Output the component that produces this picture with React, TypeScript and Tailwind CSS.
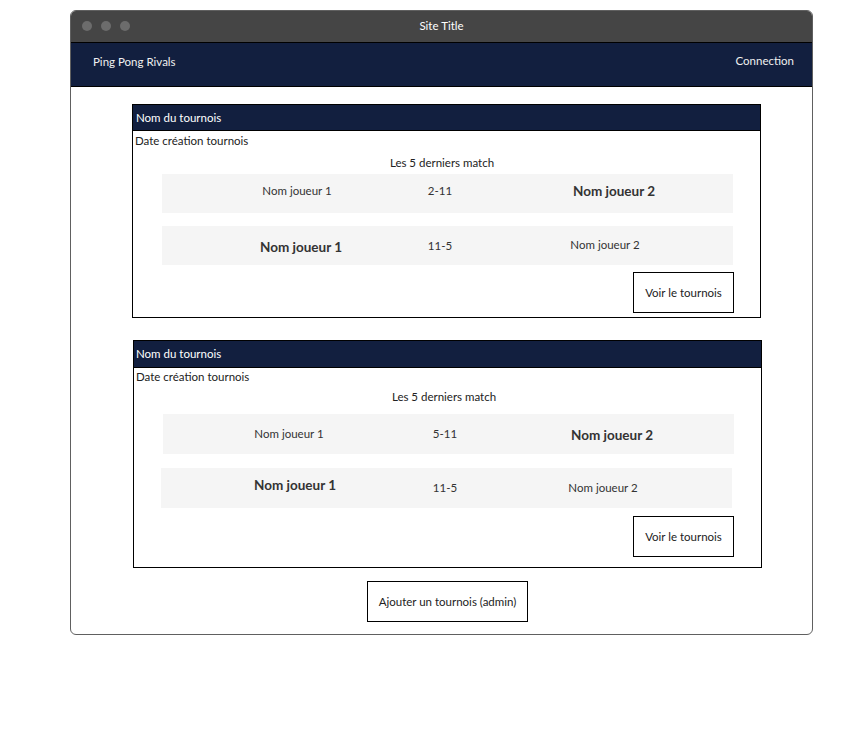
import React from "react";

const F = "font-['Lato',sans-serif]";

function Btn({ children, cls }: { children: React.ReactNode; cls: string }) {
  return (
    <div className={`border border-black bg-white flex items-center justify-center text-[11.5px] text-[#222] ${cls}`}>
      {children}
    </div>
  );
}

export default function App() {
  return (
    <div className={`w-[862px] h-[745px] bg-white ${F}`}>
      <div className="pt-[10px] pl-[70px]">
        <div className="w-[743px] border border-[#606060] rounded-[6px] overflow-hidden">
          {/* title bar */}
          <div className="h-[31px] bg-[#454545] relative flex items-center">
            <div className="flex gap-[9px] ml-[11px] mb-[2px]">
              <div className="w-[10px] h-[10px] rounded-full bg-[#6c6c6c]" />
              <div className="w-[10px] h-[10px] rounded-full bg-[#6c6c6c]" />
              <div className="w-[10px] h-[10px] rounded-full bg-[#6c6c6c]" />
            </div>
            <div className="absolute inset-0 flex items-center justify-center text-[11.5px] text-white pb-[1px]">Site Title</div>
          </div>
          {/* nav */}
          <div className="h-[45px] bg-[#121f3f] border-y border-black flex items-center justify-between pl-[22px] pr-[18px] text-[11.5px] text-[#f0f0f0]">
            <span className="mb-[5px]">Ping Pong Rivals</span>
            <span className="mb-[7px]">Connection</span>
          </div>

          {/* card 1 */}
          <div className="mt-[17px] ml-[61px] w-[629px] border border-black">
            <div className="h-[26px] bg-[#121f3f] border-b border-black flex items-center pl-[3px] text-[11.5px] text-white">
              Nom du tournois
            </div>
            <div className="h-[20px] flex items-center pl-[2px] text-[11.5px] text-[#222]">Date création tournois</div>
            <div className="h-[23px] flex items-center justify-center pr-[9px] text-[11.5px] text-[#222]">Les 5 derniers match</div>
            <div className="ml-[29px] w-[571px] h-[39px] bg-[#f5f5f5] flex items-center pb-[5px] text-[#333]">
              <div className="ml-[75px] w-[120px] text-center text-[11.5px]">Nom joueur 1</div>
              <div className="ml-[23px] w-[120px] text-center text-[11.5px]">2-11</div>
              <div className="ml-[54px] w-[120px] text-center text-[13.5px] font-bold">Nom joueur 2</div>
            </div>
            <div className="mt-[13px] ml-[29px] w-[571px] h-[39px] bg-[#f5f5f5] flex items-center text-[#333]">
              <div className="ml-[79px] w-[120px] text-center text-[13.5px] font-bold mt-[3px]">Nom joueur 1</div>
              <div className="ml-[19px] w-[120px] text-center text-[11.5px]">11-5</div>
              <div className="ml-[45px] w-[120px] text-center text-[11.5px] mb-[2px]">Nom joueur 2</div>
            </div>
            <div className="mt-[7px] mb-[4px] flex justify-end pr-[26px]">
              <Btn cls="w-[101px] h-[41px]">Voir le tournois</Btn>
            </div>
          </div>

          {/* card 2 */}
          <div className="mt-[22px] ml-[62px] w-[629px] border border-black">
            <div className="h-[27px] bg-[#121f3f] border-b border-black flex items-center pl-[2px] text-[11.5px] text-white">
              Nom du tournois
            </div>
            <div className="h-[18px] flex items-center pl-[2px] text-[11.5px] text-[#222]">Date création tournois</div>
            <div className="h-[22px] flex items-center justify-center pr-[7px] text-[11.5px] text-[#222]">Les 5 derniers match</div>
            <div className="mt-[6px] ml-[29px] w-[571px] h-[40px] bg-[#f5f5f5] flex items-center text-[#333]">
              <div className="ml-[66px] w-[120px] text-center text-[11.5px] mb-[1px]">Nom joueur 1</div>
              <div className="ml-[36px] w-[120px] text-center text-[11.5px] mb-[1px]">5-11</div>
              <div className="ml-[47px] w-[120px] text-center text-[13.5px] font-bold mt-[2px]">Nom joueur 2</div>
            </div>
            <div className="mt-[14px] ml-[27px] w-[571px] h-[40px] bg-[#f5f5f5] flex items-center text-[#333]">
              <div className="ml-[74px] w-[120px] text-center text-[13.5px] font-bold mb-[5px]">Nom joueur 1</div>
              <div className="ml-[30px] w-[120px] text-center text-[11.5px]">11-5</div>
              <div className="ml-[38px] w-[120px] text-center text-[11.5px] mb-[1px]">Nom joueur 2</div>
            </div>
            <div className="mt-[8px] mb-[10px] flex justify-end pr-[27px]">
              <Btn cls="w-[101px] h-[41px]">Voir le tournois</Btn>
            </div>
          </div>

          <div className="mt-[13px] mb-[12px] ml-[296px]">
            <Btn cls="w-[161px] h-[41px]">Ajouter un tournois (admin)</Btn>
          </div>
        </div>
      </div>
    </div>
  );
}
